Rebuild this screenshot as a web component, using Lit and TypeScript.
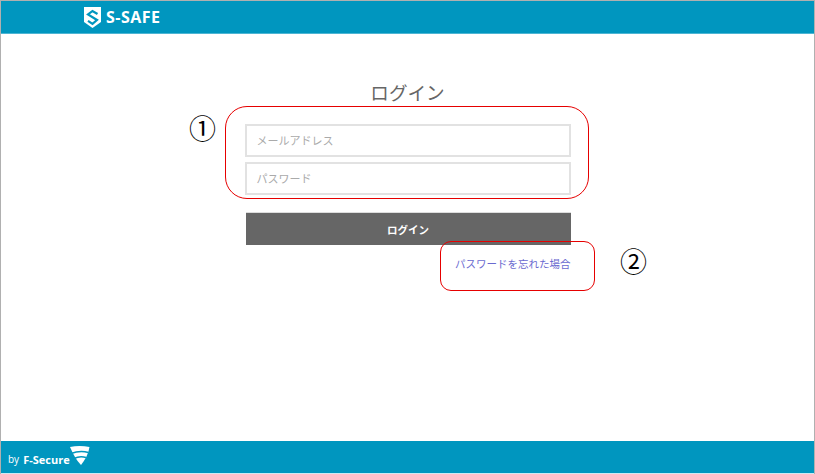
import { LitElement, html, css } from "lit";
import { customElement } from "lit/decorators.js";

@customElement("app-root")
export class AppRoot extends LitElement {
  static styles = css`
    :host {
      display: flex;
      flex-direction: column;
      width: 815px;
      height: 474px;
      box-sizing: border-box;
      border: 1px solid #b0b0b0;
      border-bottom: 0;
      background: #fff;
      position: relative;
      overflow: hidden;
      font-family: "Noto Sans CJK JP", "Noto Sans", sans-serif;
    }
    .top {
      height: 32px;
      flex: none;
      background: #0096bf;
      border-bottom: 1px solid #4db5d3;
      display: flex;
      align-items: center;
      padding-left: 83px;
      gap: 5px;
      color: #fff;
    }
    .brand {
      font: 700 16px/1 "Open Sans", "Noto Sans", sans-serif;
      letter-spacing: 0.5px;
    }
    main {
      flex: 1;
      display: flex;
      flex-direction: column;
      align-items: center;
    }
    h1 {
      margin: 44px 0 0;
      height: 27px;
      font-size: 18.6px;
      line-height: 27px;
      font-weight: 400;
      color: #666;
      text-align: center;
    }
    .form {
      width: 326px;
      margin-top: 19px;
      display: flex;
      flex-direction: column;
    }
    .field {
      box-sizing: border-box;
      width: 100%;
      height: 33px;
      border: 2px solid #e2e2e2;
      padding: 0 10px 2px;
      font: 400 11px "Noto Sans CJK JP", sans-serif;
      color: #aaa;
      display: flex;
      align-items: center;
    }
    .field + .field {
      margin-top: 5px;
    }
    .btn {
      margin: 17px 0 0 1px;
      height: 33px;
      background: #666;
      border-top: 1px solid #ddd;
      box-sizing: border-box;
      color: #fff;
      font-size: 10.5px;
      font-weight: 700;
      display: flex;
      align-items: center;
      justify-content: center;
    }
    .forgot {
      margin-top: 11px;
      display: flex;
      justify-content: flex-end;
      font-size: 10.5px;
      line-height: 16px;
      color: #6a6ad0;
    }
    .bottom {
      height: 32px;
      flex: none;
      background: #0096bf;
      color: #fff;
      display: flex;
      align-items: center;
      padding-left: 7px;
      border-bottom: 1px solid #cfe9f1;
    }
    .by {
      font: 400 10px "Open Sans", sans-serif;
      margin-right: 4px;
      padding-top: 4px;
    }
    .fs {
      font: 700 11px "Open Sans", sans-serif;
      padding-top: 4px;
    }
    .logo {
      margin: -3px 0 0 0;
    }
    .mark {
      position: absolute;
      border: 1px solid #e60000;
      box-sizing: border-box;
      pointer-events: none;
    }
    .m1 {
      left: 224px;
      top: 105px;
      width: 364px;
      height: 93px;
      border-radius: 22px;
    }
    .m2 {
      left: 439px;
      top: 240px;
      width: 155px;
      height: 50px;
      border-radius: 11px;
    }
    .num {
      position: absolute;
      font: 400 27px/30px "Noto Sans CJK JP", sans-serif;
      color: #000;
    }
    .n1 { left: 188px; top: 112px; }
    .n2 { left: 619px; top: 245px; }
  `;

  render() {
    return html`
      <header class="top">
        <svg width="17" height="21" viewBox="0 0 17 21">
          <path fill="#fff" d="M0 0H17V15L8.5 21L0 15Z"/>
          <path fill="none" stroke="#0096bf" stroke-width="2.2"
            d="M13.5 7L8.5 4L4 7.5L13 13L8.5 16.8L4 13.8"/>
        </svg>
        <span class="brand">S-SAFE</span>
      </header>
      <main>
        <h1>ログイン</h1>
        <div class="form">
          <div class="field">メールアドレス</div>
          <div class="field">パスワード</div>
          <div class="btn">ログイン</div>
          <div class="forgot"><span>パスワードを忘れた場合</span></div>
        </div>
      </main>
      <footer class="bottom">
        <span class="by">by</span>
        <span class="fs">F-Secure</span>
        <svg class="logo" width="20" height="20" viewBox="0 0 20 20">
          <path fill="#fff" d="M0 1C6 -.3 13 -.3 19.5 1C18.5 8 15 14 11 19C7 15 3 8 0 1Z"/>
          <path fill="none" stroke="#0096bf" stroke-width="1.6" d="M1 7.5Q10 4 18.5 6.5"/>
          <path fill="none" stroke="#0096bf" stroke-width="1.4" d="M4 12.5Q10 9.5 16 11.5"/>
        </svg>
      </footer>
      <div class="mark m1"></div>
      <div class="mark m2"></div>
      <span class="num n1">①</span>
      <span class="num n2">②</span>
    `;
  }
}
